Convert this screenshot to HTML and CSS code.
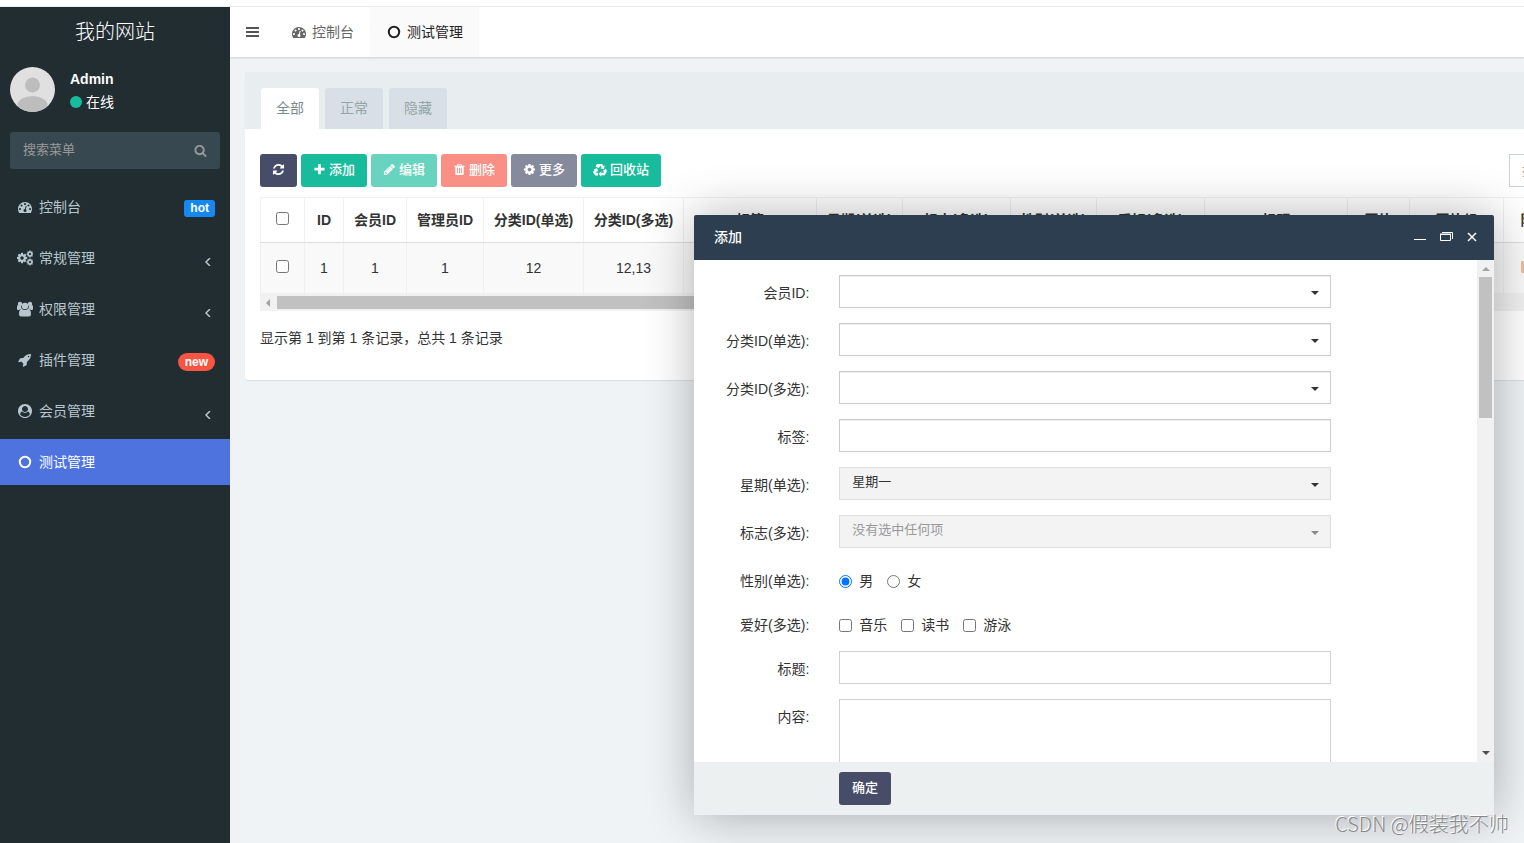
FILE: index.html
```html
<!DOCTYPE html>
<html lang="zh-CN">
<head>
<meta charset="utf-8">
<title>测试管理</title>
<link rel="stylesheet" href="styles.css">
</head>
<body>
<svg class="sprite" aria-hidden="true">
  <symbol id="dash" viewBox="0 0 1792 1792"><path d="M384 1152q0-53-37.500-90.500t-90.500-37.500-90.500 37.500-37.500 90.500 37.500 90.500 90.500 37.500 90.500-37.500 37.500-90.500zm192-448q0-53-37.500-90.500t-90.500-37.500-90.500 37.500-37.500 90.500 37.500 90.500 90.500 37.500 90.500-37.500 37.500-90.500zm428 481l101-382q6-26-7.500-48.500t-38.500-29.500-48 6.500-30 39.500l-101 382q-60 5-107 43.500t-63 98.500q-20 77 20 146t117 89 146-20 89-117q16-60-6-117t-72-91zm660-33q0-53-37.500-90.500t-90.500-37.500-90.500 37.500-37.500 90.500 37.500 90.500 90.500 37.500 90.500-37.500 37.500-90.500zm-640-640q0-53-37.500-90.500t-90.500-37.500-90.500 37.500-37.500 90.500 37.500 90.500 90.500 37.500 90.500-37.500 37.500-90.500zm448 192q0-53-37.500-90.500t-90.500-37.500-90.500 37.500-37.500 90.500 37.500 90.500 90.500 37.500 90.500-37.500 37.500-90.500zm320 448q0 261-141 483-19 29-54 29h-1402q-35 0-54-29-141-221-141-483 0-182 71-348t191-286 286-191 348-71 348 71 286 191 191 286 71 348z"/></symbol>
  <symbol id="plus" viewBox="0 0 1792 1792"><path d="M1600 736v192q0 40-28 68t-68 28h-416v416q0 40-28 68t-68 28h-192q-40 0-68-28t-28-68v-416h-416q-40 0-68-28t-28-68v-192q0-40 28-68t68-28h416v-416q0-40 28-68t68-28h192q40 0 68 28t28 68v416h416q40 0 68 28t28 68z"/></symbol>
  <symbol id="refresh" viewBox="0 0 1792 1792"><path d="M1639 1056q0 5-1 7-64 268-268 434.500t-478 166.500q-146 0-282.500-55t-243.500-157l-129 129q-19 19-45 19t-45-19-19-45v-448q0-26 19-45t45-19h448q26 0 45 19t19 45-19 45l-137 137q71 66 161 102t187 36q134 0 250-65t186-179q11-17 53-117 8-23 30-23h192q13 0 22.500 9.500t9.500 22.500zm25-800v448q0 26-19 45t-45 19h-448q-26 0-45-19t-19-45 19-45l138-138q-148-137-349-137-134 0-250 65t-186 179q-11 17-53 117-8 23-30 23h-199q-13 0-22.500-9.500t-9.500-22.500v-7q65-268 270-434.500t480-166.500q146 0 284 55.500t245 156.500l130-129q19-19 45-19t45 19 19 45z"/></symbol>
  <symbol id="pencil" viewBox="0 0 1792 1792"><path d="M491 1536l91-91-235-235-91 91v107h128v128h107zm523-928q0-22-22-22-10 0-17 7l-542 542q-7 7-7 17 0 22 22 22 10 0 17-7l542-542q7-7 7-17zm-54-192l416 416-832 832h-416v-416zm683 96q0 53-37 90l-166 166-416-416 166-165q36-38 90-38 53 0 91 38l235 234q37 39 37 91z"/></symbol>
  <symbol id="trash" viewBox="0 0 1792 1792"><path d="M704 1376v-704q0-14-9-23t-23-9h-64q-14 0-23 9t-9 23v704q0 14 9 23t23 9h64q14 0 23-9t9-23zm256 0v-704q0-14-9-23t-23-9h-64q-14 0-23 9t-9 23v704q0 14 9 23t23 9h64q14 0 23-9t9-23zm256 0v-704q0-14-9-23t-23-9h-64q-14 0-23 9t-9 23v704q0 14 9 23t23 9h64q14 0 23-9t9-23zm-544-992h448l-48-117q-7-9-17-11h-317q-10 2-17 11zm928 32v64q0 14-9 23t-23 9h-96v948q0 83-47 143.500t-113 60.500h-832q-66 0-113-58.500t-47-141.500v-952h-96q-14 0-23-9t-9-23v-64q0-14 9-23t23-9h309l70-167q15-37 54-63t79-26h320q40 0 79 26t54 63l70 167h309q14 0 23 9t9 23z"/></symbol>
  <symbol id="cog" viewBox="0 0 1792 1792"><path d="M1152 896q0-106-75-181t-181-75-181 75-75 181 75 181 181 75 181-75 75-181zm512-109v222q0 12-8 23t-20 13l-185 28q-19 54-39 91 35 50 107 138 10 12 10 25t-9 23q-27 37-99 108t-94 71q-12 0-26-9l-138-108q-44 23-91 38-16 136-29 186-7 28-36 28h-222q-14 0-24.500-8.500t-11.500-21.500l-28-184q-49-16-90-37l-141 107q-10 9-25 9-14 0-25-11-126-114-165-168-7-10-7-23 0-12 8-23 15-21 51-66.500t54-70.500q-27-50-41-99l-183-27q-13-2-21-12.500t-8-23.500v-222q0-12 8-23t19-13l186-28q14-46 39-92-40-57-107-138-10-12-10-24 0-10 9-23 26-36 98.500-107.500t94.500-71.500q13 0 26 10l138 107q44-23 91-38 16-136 29-186 7-28 36-28h222q14 0 24.500 8.500t11.500 21.500l28 184q49 16 90 37l142-107q9-9 24-9 13 0 25 10 129 119 165 170 7 8 7 22 0 12-8 23-15 21-51 66.500t-54 70.500q26 50 41 98l183 28q13 2 21 12.500t8 23.500z"/></symbol>
  <symbol id="search" viewBox="0 0 1792 1792"><path d="M1216 832q0-185-131.500-316.500t-316.500-131.500-316.500 131.500-131.500 316.500 131.500 316.500 316.500 131.500 316.500-131.500 131.500-316.500zm512 832q0 52-38 90t-90 38q-54 0-90-38l-343-342q-179 124-399 124-143 0-273.500-55.500t-225-150-150-225-55.500-273.500 55.500-273.500 150-225 225-150 273.500-55.500 273.500 55.500 225 150 150 225 55.500 273.500q0 220-124 399l343 343q37 37 37 90z"/></symbol>
  <symbol id="rocket" viewBox="0 0 1792 1792"><path d="M1440 448q0-40-28-68t-68-28-68 28-28 68 28 68 68 28 68-28 28-68zm224-288q0 249-75.500 430.500t-253.500 360.500q-81 80-195 176l-20 379q-2 16-16 26l-384 224q-7 4-16 4-12 0-23-9l-64-64q-13-14-8-32l85-276-281-281-276 85q-3 1-9 1-14 0-23-9l-64-64q-17-19-5-39l224-384q10-14 26-16l379-20q96-114 176-195 188-187 358-258t431-71q14 0 24 9.500t10 22.500z"/></symbol>
  <symbol id="cogs" viewBox="0 0 16 16"><use href="#cog" x="-1" y="2" width="12" height="12"/><use href="#cog" x="9" y="0" width="8" height="8"/><use href="#cog" x="9" y="8" width="8" height="8"/></symbol>
  <symbol id="users" viewBox="0 0 16 16"><circle cx="3" cy="3" r="2.200"/><circle cx="13" cy="3" r="2.200"/><circle cx="8" cy="5" r="3.300"/><path d="M0 8V6q0-2 1-2 1 1 3 1 0 2 1 3-2 0-3 1H1Q0 9 0 8zM16 8V6q0-2-1-2-1 1-3 1 0 2-1 3 2 0 3 1h1q1 0 1-1zM5 8q3 2 6 0 3 0 3 5 0 2.500-2 2.500H4q-2 0-2-2.500 0-5 3-5z"/></symbol>
  <symbol id="person" viewBox="0 0 1792 1792"><path d="M1523 1339q-22-155-87.500-257.500T1251 963q-67 74-159.500 115.500T896 1120t-195.500-41.500T541 963q-119 16-184.500 118.500T269 1339q106 150 271 237.500t356 87.500 356-87.500 271-237.500zm-243-699q0-159-112.500-271.500T896 256 624.500 368.500 512 640t112.500 271.500T896 1024t271.500-112.500T1280 640zm512 256q0 182-71 347.500t-190.500 286T1245 1721t-349 71q-182 0-348-71t-286-191-191-286T0 896t71-348 191-286T548 71t348-71 348 71 286 191 191 286 71 348z" fill-rule="evenodd"/></symbol>
  <symbol id="ring" viewBox="0 0 14 14"><circle cx="7" cy="7" r="5.200" fill="none" stroke="currentColor" stroke-width="2"/></symbol>
  <symbol id="recycle" viewBox="0 0 16 16"><path d="M4.500 1h6l1.500 2.500 1.500-.8L12.500 7 8.500 6l1.400-.9L8.500 3 6.600 6 3 4zM11.500 8.500l3.200-1.800 1.300 2.800-2.500 4.500h-4v1.800L6.500 12.500l3-3.200v1.900h3zM.5 7l4.200-1L6 10l-1.500-.8-1.200 2h2.500v3H2.500L0 10.500 1.800 7.800z"/></symbol>
</svg>

<div class="strip"></div>
<div class="app">
  <aside class="sidebar">
    <div class="logo">我的网站</div>
    <div class="user">
      <svg class="avatar" viewBox="0 0 45 45" role="img" aria-label="Admin"><defs><clipPath id="round"><circle cx="22.500" cy="22.500" r="22.500"/></clipPath></defs><g clip-path="url(#round)"><rect width="45" height="45" fill="#e0e0e0"/><circle cx="22.500" cy="18" r="7.500" fill="#bdbdbd"/><ellipse cx="22.500" cy="38" rx="15" ry="9" fill="#bdbdbd"/></g></svg>
      <div class="user-info"><strong>Admin</strong><span class="online"><i class="dot"></i>在线</span></div>
    </div>
    <form class="menu-search">
      <input type="text" placeholder="搜索菜单" aria-label="搜索菜单">
      <button type="button" aria-label="搜索"><svg class="icon-s"><use href="#search"/></svg></button>
    </form>
    <nav class="menu">
      <a href="#"><svg class="icon"><use href="#dash"/></svg><span>控制台</span><b class="tag hot">hot</b></a>
      <a href="#"><svg class="icon wide"><use href="#cogs"/></svg><span>常规管理</span><svg class="chev" viewBox="0 0 6 8"><path d="M5 0L1 4l4 4"/></svg></a>
      <a href="#"><svg class="icon wide"><use href="#users"/></svg><span>权限管理</span><svg class="chev" viewBox="0 0 6 8"><path d="M5 0L1 4l4 4"/></svg></a>
      <a href="#"><svg class="icon"><use href="#rocket"/></svg><span>插件管理</span><b class="tag new">new</b></a>
      <a href="#"><svg class="icon"><use href="#person"/></svg><span>会员管理</span><svg class="chev" viewBox="0 0 6 8"><path d="M5 0L1 4l4 4"/></svg></a>
      <a href="#" class="active"><svg class="icon"><use href="#ring"/></svg><span>测试管理</span></a>
    </nav>
  </aside>

  <main class="main">
    <header class="topbar">
      <button class="burger" type="button" aria-label="菜单"><i></i><i></i><i></i></button>
      <a href="#" class="toptab"><svg class="icon"><use href="#dash"/></svg>控制台</a>
      <a href="#" class="toptab current"><svg class="icon"><use href="#ring"/></svg>测试管理</a>
    </header>
    <section class="panel">
      <div class="tabs">
        <a href="#" class="on">全部</a><a href="#">正常</a><a href="#">隐藏</a>
      </div>
      <div class="panel-body">
        <div class="toolbar">
          <button type="button" class="btn dark" aria-label="刷新"><svg class="icon-s"><use href="#refresh"/></svg></button>
          <button type="button" class="btn green"><svg class="icon-s"><use href="#plus"/></svg>添加</button>
          <button type="button" class="btn green faded"><svg class="icon-s"><use href="#pencil"/></svg>编辑</button>
          <button type="button" class="btn red faded"><svg class="icon-s"><use href="#trash"/></svg>删除</button>
          <button type="button" class="btn dark faded"><svg class="icon-s"><use href="#cog"/></svg>更多</button>
          <button type="button" class="btn green"><svg class="icon"><use href="#recycle"/></svg>回收站</button>
          <input class="table-search" type="text" placeholder="搜索" aria-label="搜索">
        </div>
        <div class="table-wrap">
          <table>
            <colgroup><col class="w44"><col class="w39"><col class="w63"><col class="w77"><col class="w100"><col class="w100"><col class="w133"><col class="w86"><col class="w108"><col class="w86"><col class="w108"><col class="w143"><col class="w62"><col class="w94"><col class="w62"><col></colgroup>
            <thead><tr><th><input type="checkbox" aria-label="全选"></th><th>ID</th><th>会员ID</th><th>管理员ID</th><th>分类ID(单选)</th><th>分类ID(多选)</th><th>标签</th><th>星期(单选)</th><th>标志(多选)</th><th>性别(单选)</th><th>爱好(多选)</th><th>标题</th><th>图片</th><th>图片组</th><th>附件</th><th></th></tr></thead>
            <tbody><tr><td><input type="checkbox" aria-label="选择 1"></td><td>1</td><td>1</td><td>1</td><td>12</td><td>12,13</td><td></td><td></td><td></td><td></td><td></td><td></td><td></td><td></td><td><i class="file"></i></td><td></td></tr></tbody>
          </table>
          <div class="hbar"><i class="tri left"></i><i class="thumb"></i></div>
        </div>
        <p class="summary">显示第 1 到第 1 条记录，总共 1 条记录</p>
      </div>
    </section>
  </main>
</div>

<div class="dialog" role="dialog" aria-labelledby="dlg-title">
  <div class="dlg-head">
    <span id="dlg-title">添加</span>
    <div class="dlg-tools">
      <button type="button" aria-label="最小化"><svg viewBox="0 0 14 14"><path d="M1 9.500h12"/></svg></button>
      <button type="button" aria-label="最大化"><svg viewBox="0 0 14 14"><path d="M1.500 4.500h10v6h-10zM1 4h11M3 2.500h10.500V9"/></svg></button>
      <button type="button" aria-label="关闭"><svg viewBox="0 0 14 14"><path class="x" d="M3 3l8 8M11 3l-8 8"/></svg></button>
    </div>
  </div>
  <div class="dlg-main">
    <form class="form" id="add-form">
      <div class="row"><label for="f1">会员ID:</label><div class="pick"><input id="f1" type="text"></div></div>
      <div class="row"><label for="f2">分类ID(单选):</label><div class="pick"><input id="f2" type="text"></div></div>
      <div class="row"><label for="f3">分类ID(多选):</label><div class="pick"><input id="f3" type="text"></div></div>
      <div class="row"><label for="f4">标签:</label><div><input id="f4" type="text"></div></div>
      <div class="row"><label for="f5">星期(单选):</label><div class="pick"><select id="f5"><option>星期一</option></select></div></div>
      <div class="row"><label for="f6">标志(多选):</label><div class="pick muted"><select id="f6"><option>没有选中任何项</option></select></div></div>
      <div class="row"><span class="label">性别(单选):</span><div class="choices"><label><input type="radio" name="sex" checked>男</label><label><input type="radio" name="sex">女</label></div></div>
      <div class="row"><span class="label">爱好(多选):</span><div class="choices"><label><input type="checkbox">音乐</label><label><input type="checkbox">读书</label><label><input type="checkbox">游泳</label></div></div>
      <div class="row soft"><label for="f9">标题:</label><div><input id="f9" type="text"></div></div>
      <div class="row soft"><label for="f10">内容:</label><div><textarea id="f10" rows="5"></textarea></div></div>
    </form>
    <div class="vbar"><i class="tri up"></i><i class="thumb"></i><i class="tri down"></i></div>
  </div>
  <div class="dlg-foot"><button type="submit" form="add-form" class="btn dark">确定</button></div>
</div>
<div class="watermark">CSDN @假装我不帅</div>
</body>
</html>
```
FILE: styles.css
```css
* { box-sizing: border-box; }
html, body { height: 100%; }
body {
  margin: 0;
  display: flex;
  flex-direction: column;
  overflow: hidden;
  position: relative;
  background: #eff3f6;
  color: #333;
  font: 14px/20px "Liberation Sans", "Noto Sans CJK SC", sans-serif;
}
a { color: inherit; text-decoration: none; }
button, input, select, textarea { font: inherit; color: inherit; }
button { border: 0; background: none; padding: 0; cursor: pointer; }
.sprite { display: none; }
.icon, .icon-s { width: 14px; height: 14px; fill: currentColor; flex: none; }
.icon-s { width: 13px; height: 13px; }
.icon.wide { width: 16px; height: 16px; margin: 0 -1px; }

.strip { height: 7px; flex: none; background: #fff; border-bottom: 1px solid #ececec; }
.app { flex: 1; display: flex; min-height: 0; }

/* Sidebar */
.sidebar { width: 230px; flex: none; background: #222d32; }
.logo { height: 50px; line-height: 51px; text-align: center; font-size: 20px; font-weight: 300; color: #fff; }
.user { display: flex; gap: 15px; padding: 10px; color: #fff; }
.avatar { width: 45px; height: 45px; }
.user-info { display: flex; flex-direction: column; gap: 3px; padding-top: 2px; }
.online { display: flex; align-items: center; gap: 4px; }
.dot { width: 12px; height: 12px; border-radius: 50%; background: #18bc9c; }
.menu-search { display: flex; margin: 10px; height: 37px; border-radius: 3px; background: #374850; color: #999; }
.menu-search input { flex: 1; min-width: 0; border: 0; background: none; padding: 0 13px 2px; font-size: 13px; }
.menu-search input::placeholder { color: #999; }
.menu-search button { width: 40px; display: grid; place-items: center; padding-bottom: 1px; }
.menu { display: flex; flex-direction: column; gap: 5px; padding-top: 5px; color: #b8c7ce; }
.menu a { display: flex; align-items: center; height: 46px; padding: 0 15px 0 18px; gap: 7px; }
.menu span { flex: 1; }
.menu .active { background: #4e73df; color: #fff; }
.chev { width: 6px; height: 8px; margin: 8px 4px 0 0; fill: none; stroke: currentColor; stroke-width: 1.5; }
.tag { color: #fff; font-size: 12px; line-height: 17px; padding: 0 6px; border-radius: 3px; margin-top: 2px; }
.hot { background: #1688f1; }
.new { background: #f75444; border-radius: 9px; line-height: 18px; margin-top: 4px; padding: 0 7px; }

/* Top bar */
.main { flex: 1; min-width: 0; overflow: hidden; }
.topbar { display: flex; height: 50px; background: #fff; box-shadow: 0 1px 2px rgba(0, 0, 0, .15); }
.burger { width: 46px; display: flex; flex-direction: column; justify-content: center; gap: 2px; padding: 0 16px; }
.burger i { height: 2px; width: 13px; background: #555; }
.toptab { display: flex; align-items: center; gap: 6px; padding: 0 16px; color: #666; }
.toptab.current { background: #fafafa; color: #222; padding: 0 16px 0 17px; }

/* Panel */
.panel { margin: 15px -200px 0 15px; background: #fff; border-radius: 3px; box-shadow: 0 1px 1px rgba(0, 0, 0, .08); }
.tabs { display: flex; gap: 6px; padding: 16px 16px 0; background: #e8edf0; }
.tabs a { width: 58px; height: 41px; line-height: 40px; text-align: center; border-radius: 3px 3px 0 0; background: #d8dfe6; color: #95a5a6; }
.tabs .on { background: #fff; color: #7b8a8b; }
.panel-body { padding: 25px 15px 32px; }
.toolbar { display: flex; gap: 4px; margin-bottom: 10px; }
.btn { display: inline-flex; align-items: center; justify-content: center; gap: 3px; height: 33px; padding: 0 12px 2px; border-radius: 3px; color: #fff; font-size: 13px; font-weight: 500; }
.dark { background: #474c69; }
.green { background: #18bc9c; }
.red { background: #f75444; }
.faded { opacity: .65; }
.table-search { width: 200px; height: 33px; margin-left: auto; border: 1px solid #ccd0da; padding: 0 12px; font-size: 13px; }
.table-search::placeholder { color: #999; }
table { width: 100%; table-layout: fixed; border-collapse: collapse; }
th, td { border: 1px solid #f0f0f0; padding: 0; text-align: center; white-space: nowrap; }
th { height: 45px; border-bottom-color: #ddd; }
td { height: 51px; background: #f9f9f9; }
th input, td input { margin: 0; display: inline-block; }
.w39 { width: 39px; } .w44 { width: 44px; } .w62 { width: 62px; } .w63 { width: 63px; }
.w77 { width: 77px; } .w86 { width: 86px; } .w94 { width: 94px; } .w100 { width: 100px; }
.w108 { width: 108px; } .w133 { width: 133px; } .w143 { width: 143px; }
.file { display: inline-block; width: 28px; height: 12px; border-radius: 1px; background: #ecc0a4; }
.hbar { display: flex; align-items: center; height: 17px; background: #f1f1f1; }
.hbar .thumb { width: 70%; height: 13px; background: #c1c1c1; }
.tri { flex: none; border: 4px solid transparent; }
.tri.left { border-right-color: #a3a3a3; margin: 0 7px 0 2px; }
.summary { margin: 17px 0 0; }

/* Dialog */
.dialog { position: absolute; left: 694px; top: 215px; width: 800px; height: 600px; display: flex; flex-direction: column; background: #fff; border-radius: 2px; box-shadow: 1px 1px 50px rgba(0, 0, 0, .3); }
.dlg-head { display: flex; align-items: center; justify-content: space-between; height: 45px; padding: 0 15px 1px 20px; background: #2c3e50; color: #fff; font-weight: 500; border-radius: 2px 2px 0 0; }
.dlg-tools { display: flex; gap: 12px; }
.dlg-tools button { display: flex; }
.dlg-tools svg { width: 14px; height: 14px; fill: none; stroke: #fff; }
.dlg-tools .x { stroke-width: 1.5; }
.dlg-main { flex: 1; display: flex; min-height: 0; overflow: hidden; }
.form { flex: 1; display: flex; flex-direction: column; gap: 15px; padding: 15px 1px 0 0; }
.row { display: grid; grid-template-columns: 2fr 8fr 2fr; flex: none; min-height: 29px; }
.row > * { padding: 0 15px; min-width: 0; }
.row > label, .label { padding-top: 8px; text-align: right; white-space: nowrap; }
.row > div > input, .row select, .row textarea { display: block; width: 100%; height: 33px; border: 1px solid #ccc; border-radius: 0; background: #fff; padding: 0 12px; font-size: 13px; box-shadow: inset 0 1px 1px rgba(0, 0, 0, .075); }
.row select { appearance: none; background: #f3f3f3; border-color: #ddd; box-shadow: none; padding-bottom: 3px; }
.row textarea { height: 110px; resize: none; }
.soft > div > input, .row.soft textarea { border-color: #d0d0dc; box-shadow: none; }
.pick { position: relative; }
.pick::after { content: ""; position: absolute; right: 27px; top: 16px; border: 4px solid transparent; border-top-color: #333; border-bottom: 0; }
.muted select { color: #999; }
.muted::after { border-top-color: #888; }
.row > .choices { display: flex; gap: 14px; padding-top: 8px; }
.choices label { display: flex; align-items: center; gap: 7px; height: 20px; line-height: 18px; }
.choices input { width: 13px; height: 13px; margin: 0; }
.vbar { width: 17px; flex: none; display: flex; flex-direction: column; align-items: center; background: #f1f1f1; }
.vbar .thumb { width: 13px; height: 141px; background: #c1c1c1; }
.tri.up { border-bottom-color: #a3a3a3; margin: 3px 0 6px; }
.tri.down { border-top-color: #505050; margin: auto 0 3px; }
.dlg-foot { height: 53px; padding: 10px 145px; background: #ecf0f1; }
.dlg-foot .btn { padding: 0 13px 2px; }

.watermark { position: absolute; right: 15px; bottom: 4px; font: 300 20px/30px "Noto Sans CJK SC", sans-serif; color: #888; text-shadow: -1px -1px 0 #fff; }
```
